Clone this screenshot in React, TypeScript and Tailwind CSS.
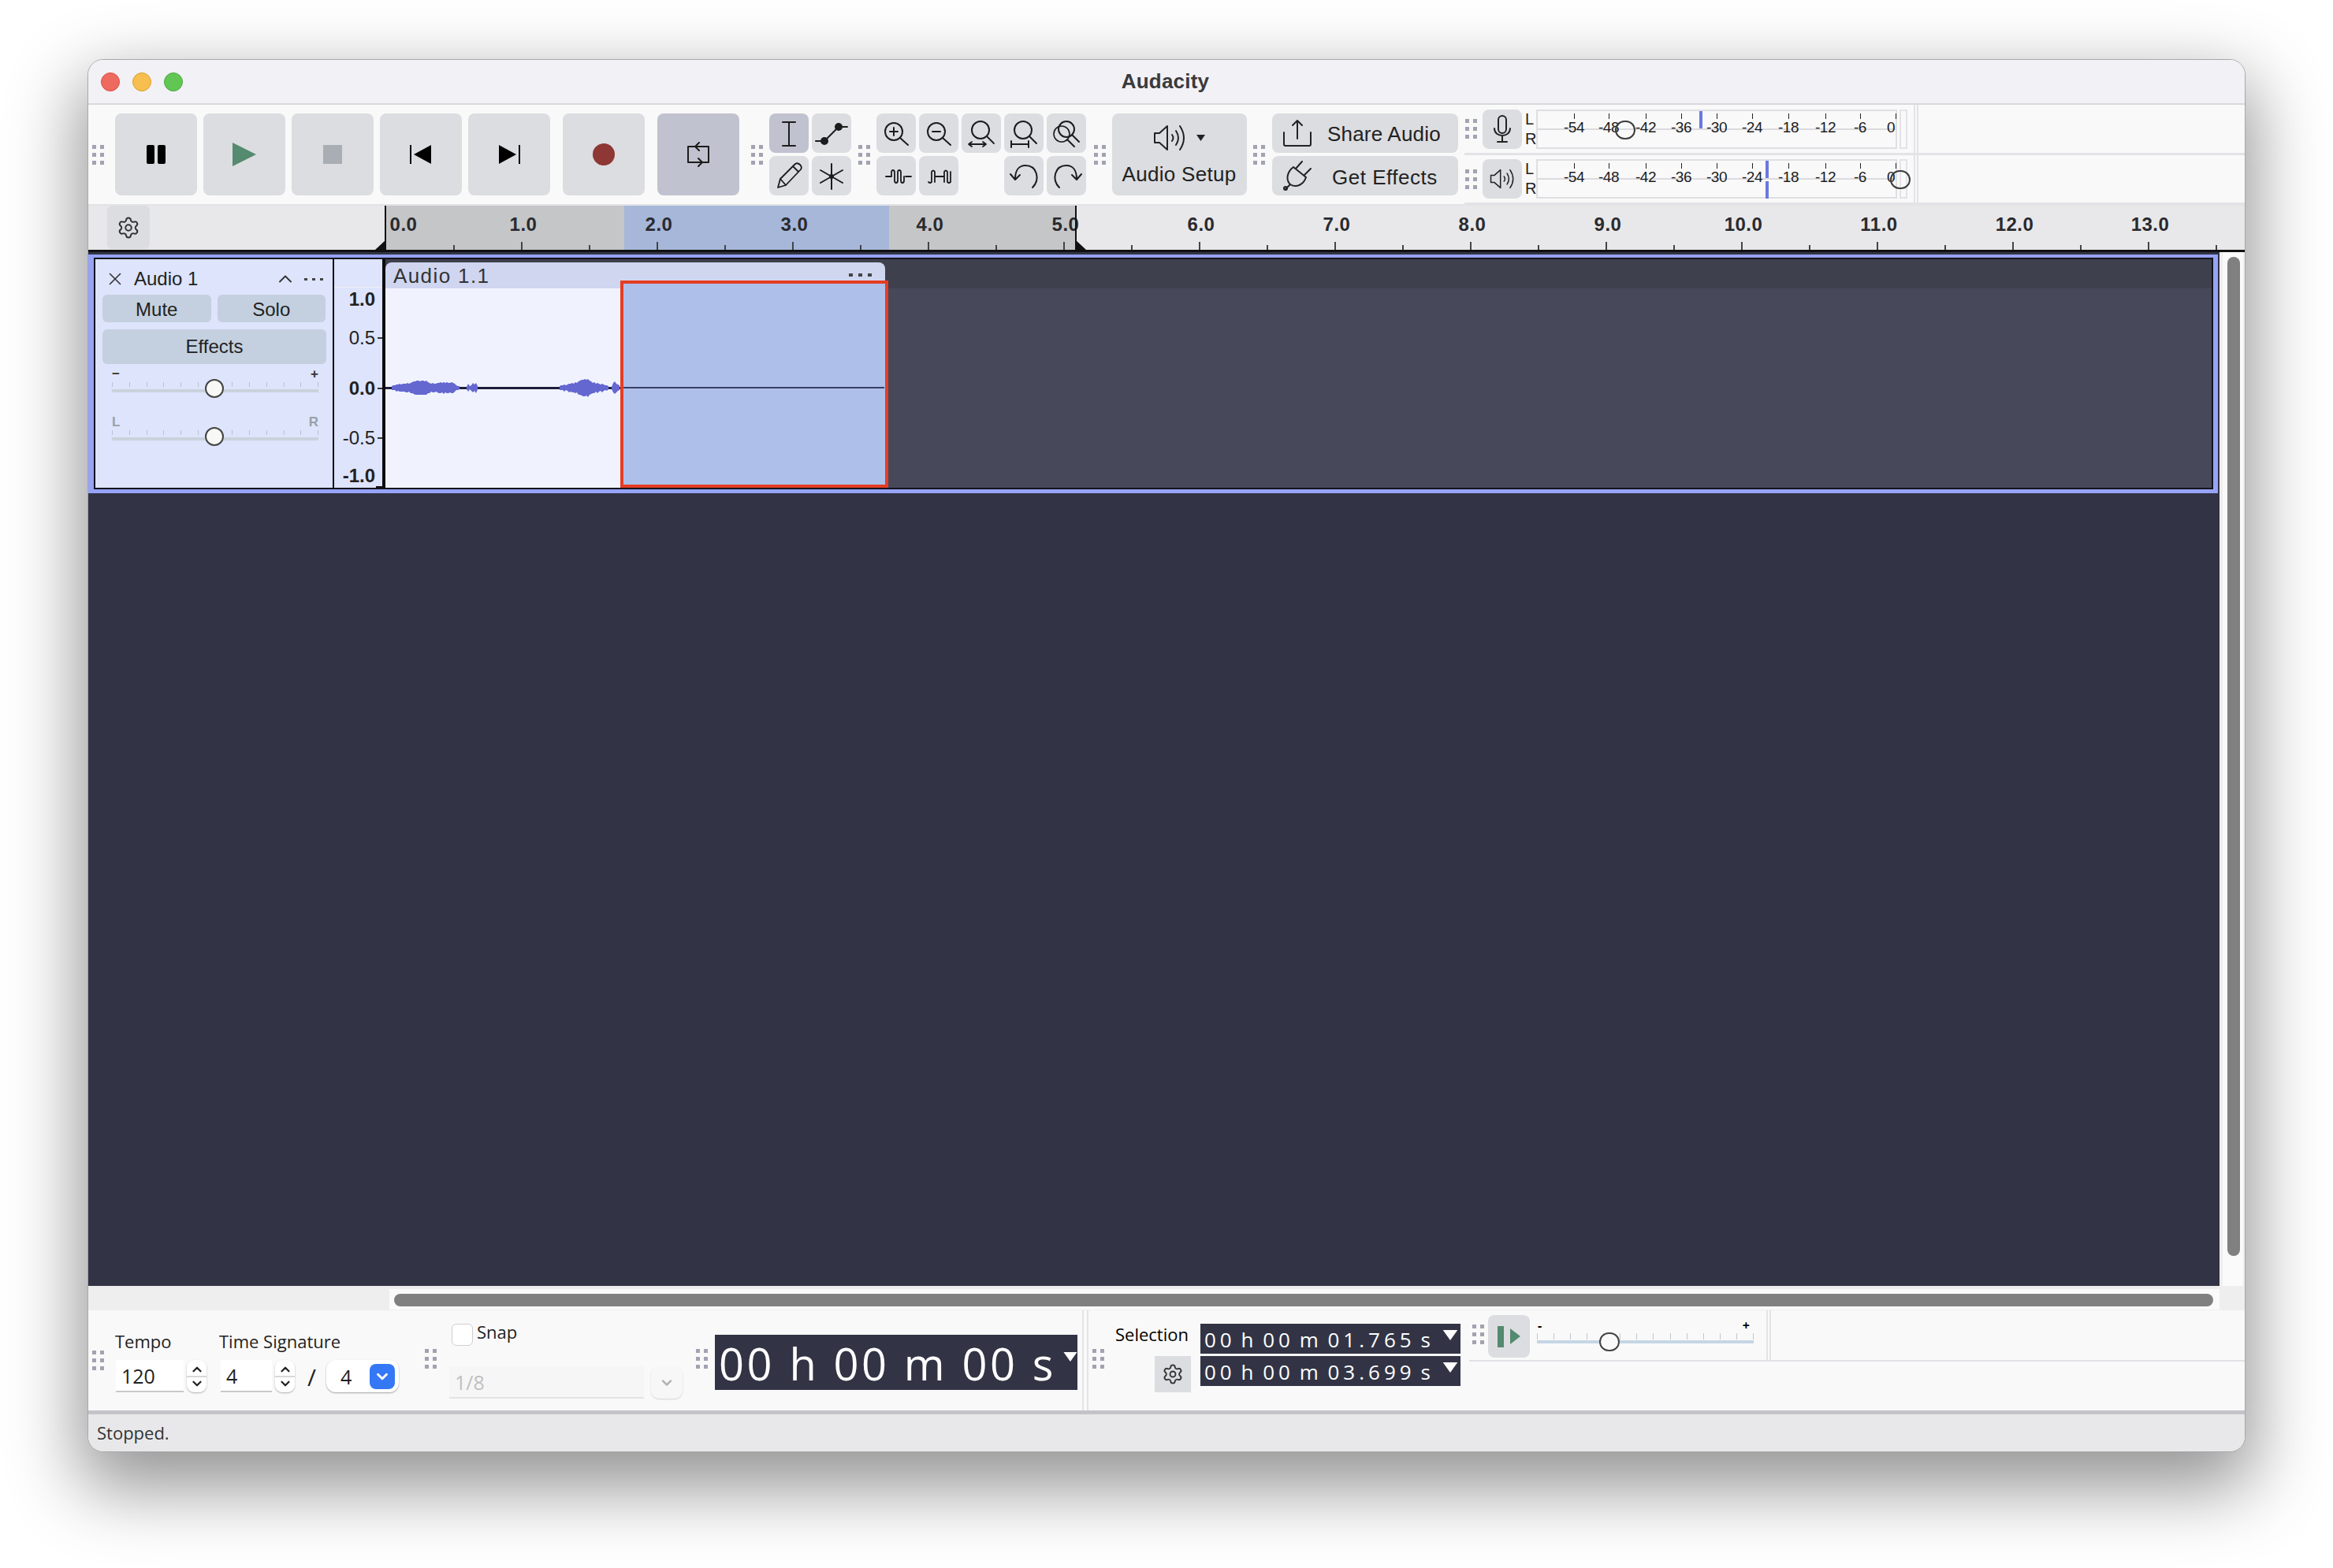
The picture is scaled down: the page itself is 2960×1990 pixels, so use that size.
import React from "react";
import { Settings, ChevronUp, ChevronDown, X } from "lucide-react";

const Grip = ({ className = "" }: { className?: string }) => (
  <div className={`grid w-[15px] shrink-0 grid-cols-2 gap-x-[5px] gap-y-[5px] ${className}`}>
    {[0, 1, 2, 3, 4, 5].map((i) => (
      <div key={i} className="h-[5px] w-[5px] bg-[#a2a2b2]" />
    ))}
  </div>
);

const Big = ({ children, className = "bg-[#dcdde1]" }: { children: React.ReactNode; className?: string }) => (
  <div className={`flex h-[104px] w-[104px] shrink-0 items-center justify-center rounded-[8px] ${className}`}>{children}</div>
);

const Tool = ({ children, on = false, blank = false }: { children?: React.ReactNode; on?: boolean; blank?: boolean }) => (
  <div className={`h-[50px] w-[50px] rounded-[8px] ${blank ? "" : on ? "bg-[#c0c2cf]" : "bg-[#dcdde1]"}`}>
    {children && (
      <svg viewBox="0 0 50 50" className="h-[50px] w-[50px]" fill="none" stroke="#1c1c1c" strokeWidth="2" strokeLinecap="round" strokeLinejoin="round">
        {children}
      </svg>
    )}
  </div>
);

const Speaker = ({ w = 42, h = 34 }: { w?: number; h?: number }) => (
  <svg width={w} height={h} viewBox="0 0 42 34" fill="none" stroke="#222" strokeWidth="2" strokeLinecap="round" strokeLinejoin="round">
    <path d="M2 11h6L18 2v30L8 23H2z" />
    <path d="M24 13q3 4 0 8" />
    <path d="M29 8q6 9 0 18" />
    <path d="M34 2q10 15 0 30" />
  </svg>
);

const meterLabels: [string, number][] = [
  ["-54", 1998], ["-48", 2042], ["-42", 2089], ["-36", 2134], ["-30", 2179],
  ["-24", 2224], ["-18", 2270], ["-12", 2317], ["-6", 2361], ["0", 2400],
];

const MeterRow = ({ icon, bar, knob, split = false, h }: { icon: React.ReactNode; bar: number; knob: number; split?: boolean; h: string }) => (
  <div className={`flex shrink-0 items-center border-b-[3px] border-[#e3e3e7] ${h}`}>
    <Grip className="ml-[1px]" />
    <div className="ml-[7px] flex h-[50px] w-[50px] items-center justify-center rounded-[8px] bg-[#dcdde1]">{icon}</div>
    <div className="ml-[4px] flex w-[14px] flex-col text-[20px] leading-[25px] text-[#222]">
      <span>L</span>
      <span>R</span>
    </div>
    <div className="relative h-[50px] w-[458px] shrink-0 border-2 border-[#dfdfe3]">
      <div className="absolute left-0 right-0 top-[22px] h-[2px] bg-[#dcdce0]" />
      {meterLabels.map(([t, x]) => (
        <React.Fragment key={t}>
          <div className="absolute top-[3px] h-[7px] w-[1px] bg-[#222]" style={{ left: (t === "0" ? 2406 : x) - 1952 }} />
          <div className="absolute top-[9px] w-[40px] text-center text-[19px] leading-[24px] tracking-[-0.5px] text-[#1c1c1c]" style={{ left: x - 1952 - 20 }}>
            {t}
          </div>
        </React.Fragment>
      ))}
      {split ? (
        <>
          <div className="absolute top-0 h-[22px] w-[4px] bg-[#6b78e0]" style={{ left: bar - 1952 }} />
          <div className="absolute top-[26px] h-[22px] w-[4px] bg-[#6b78e0]" style={{ left: bar - 1952 }} />
        </>
      ) : (
        <div className="absolute top-0 h-[22px] w-[4px] bg-[#6b78e0]" style={{ left: bar - 1952 }} />
      )}
      <div className="absolute top-[12px] z-10 h-[24px] w-[26px] rounded-full border-[2px] border-[#3c3c3c]" style={{ left: knob - 1952 - 13 }} />
    </div>
    <div className="ml-[3px] h-[50px] w-[10px] border-2 border-[#e3e3e7]" />
    <div className="ml-[8px] h-full w-[6px] border-x-2 border-[#e3e3e7]" />
  </div>
);

const seconds = Array.from({ length: 14 }, (_, i) => i);

const Ruler = () => (
  <div className="relative h-[59px] shrink-0 border-b-[3px] border-[#111] bg-[#e8e8ea]">
    <div className="absolute bottom-0 left-[377px] top-0 w-[303px] bg-[#c5c6c8]" />
    <div className="absolute bottom-0 left-[680px] top-0 w-[336px] bg-[#a6b7da]" />
    <div className="absolute bottom-0 left-[1016px] top-0 w-[236px] bg-[#c5c6c8]" />
    <div className="relative ml-[24px] flex h-[55px] w-[54px] items-center justify-center rounded-[6px] bg-[#dcdde1]">
      <Settings size={30} strokeWidth={1.6} color="#333" />
    </div>
    {seconds.map((s) => (
      <React.Fragment key={s}>
        <div
          className="absolute top-[12px] w-[60px] text-center text-[24px] font-bold leading-[24px] tracking-[0.5px] text-[#2a2a2e]"
          style={{ left: s === 0 ? 377 - 7 : 377 + 172 * s - 27 }}
        >
          {s}.0
        </div>
        {s > 0 && <div className="absolute bottom-0 h-[10px] w-[2px] bg-[#444]" style={{ left: 377 + 172 * s }} />}
        <div className="absolute bottom-0 h-[6px] w-[2px] bg-[#444]" style={{ left: 377 + 172 * s + 86 }} />
      </React.Fragment>
    ))}
    <div className="absolute bottom-0 left-[376px] top-0 w-[2px] bg-[#111]" />
    <div className="absolute bottom-0 left-[1252px] top-0 w-[2px] bg-[#111]" />
    <svg className="absolute bottom-0 left-[364px] h-[13px] w-[14px]" viewBox="0 0 14 13"><path d="M14 0V13H0z" fill="#111" /></svg>
    <svg className="absolute bottom-0 left-[1252px] h-[13px] w-[14px]" viewBox="0 0 14 13"><path d="M0 0V13H14z" fill="#111" /></svg>
  </div>
);

const HSlider = ({ left, right, dim = false }: { left: string; right: string; dim?: boolean }) => (
  <div className="relative mx-[12px] h-[44px] w-[262px]">
    <div className={`flex justify-between text-[17px] font-bold leading-[16px] ${dim ? "text-[#9aa0a8]" : "text-[#333]"}`}>
      <span>{left}</span>
      <span>{right}</span>
    </div>
    <div className="mt-[2px] flex h-[8px] items-start justify-between">
      {Array.from({ length: 13 }, (_, i) => (
        <div key={i} className="h-[6px] w-[1px] bg-[#b8c2cc]" />
      ))}
    </div>
    <div className="mt-[1px] h-[4px] bg-[#c8d3dd]" />
    <div className="absolute left-[118px] top-[14px] h-[24px] w-[24px] rounded-full border-2 border-[#444] bg-[#f8f8f6]" />
  </div>
);

const wave = (x0: number, step: number, amps: number[]) => {
  const top = amps.map((a, i) => `${x0 + i * step} ${126 - a}`);
  const bot = amps.map((a, i) => `${x0 + i * step} ${126 + a + (i % 3 === 0 ? 1 : 0)}`).reverse();
  return "M" + top.concat(bot).join("L") + "Z";
};
const waves = [
  wave(8, 2, [2, 3, 3, 4, 4, 5, 4, 5, 5, 5, 6, 5, 6, 7, 8, 8, 9, 9, 8, 9, 9, 8, 9, 7, 6, 5, 6, 5, 5, 6, 6, 7, 6, 7, 6, 7, 6, 6, 7, 6, 5, 3, 2, 2]),
  wave(103, 2, [1, 5, 2, 3, 6, 4, 6, 2]),
  wave(221, 2, [2, 3, 3, 4, 3, 4, 5, 5, 6, 5, 7, 6, 8, 9, 10, 10, 11, 10, 11, 9, 8, 6, 7, 5, 6, 5, 4, 5, 4, 3, 3, 2]),
  wave(287, 2, [1, 6, 8, 5, 4, 3]),
];

const axis: [string, number, boolean][] = [
  ["1.0", 51, true], ["0.5", 100, false], ["0.0", 164, true], ["-0.5", 227, false], ["-1.0", 275, true],
];

const TrackPanel = () => (
  <div className="w-[303px] shrink-0 border-r-2 border-[#111] bg-[#dde4fb] text-[#222]">
    <div className="flex h-[45px] items-start pt-[13px]">
      <X size={26} strokeWidth={1.5} className="ml-[12px] -mt-[1px]" color="#333" />
      <span className="ml-[11px] text-[24px] leading-[24px]">Audio 1</span>
      <ChevronUp size={28} strokeWidth={1.6} className="ml-[97px] -mt-[2px]" color="#333" />
      <div className="ml-[10px] mt-[11px] flex gap-[6px]">
        <div className="h-[3px] w-[4px] bg-[#444]" />
        <div className="h-[3px] w-[4px] bg-[#444]" />
        <div className="h-[3px] w-[4px] bg-[#444]" />
      </div>
    </div>
    <div className="flex gap-[8px] px-[9px]">
      <div className="flex h-[35px] w-[138px] items-center justify-center rounded-[6px] bg-[#c4d0df] pt-[2px] text-[24px]">Mute</div>
      <div className="flex h-[35px] w-[138px] items-center justify-center rounded-[6px] bg-[#c4d0df] pt-[2px] text-[24px]">Solo</div>
    </div>
    <div className="mx-[9px] mt-[9px] flex h-[44px] w-[284px] items-center justify-center rounded-[6px] bg-[#c4d0df] text-[24px]">Effects</div>
    <div className="mt-[5px] flex flex-col gap-[17px] pl-[9px]">
      <HSlider left="−" right="+" />
      <HSlider left="L" right="R" dim />
    </div>
  </div>
);

const Axis = () => (
  <div className="relative w-[61px] shrink-0 bg-[#dde4fb]">
    <div className="absolute left-0 right-0 top-[35px] h-[1px] bg-[#eef0f4]" />
    {axis.map(([t, y, b]) => (
      <React.Fragment key={t}>
        <div className={`absolute right-[9px] text-right text-[24px] leading-[24px] text-[#222] ${b ? "font-bold" : ""}`} style={{ top: y - 12 }}>
          {t}
        </div>
      </React.Fragment>
    ))}
    <div className="absolute right-0 top-[99px] h-[2px] w-[6px] bg-[#333]" />
    <div className="absolute right-0 top-[163px] h-[2px] w-[6px] bg-[#333]" />
    <div className="absolute right-0 top-[226px] h-[2px] w-[6px] bg-[#333]" />
    <div className="absolute bottom-0 right-0 h-[2px] w-[8px] bg-[#111]" />
  </div>
);

const Clip = () => (
  <div className="relative min-w-0 flex-1 border-l-4 border-[#0c0c0f] bg-[#474859]">
    <div className="h-[37px] bg-[#3f404d]" />
    <div className="absolute left-0 top-[4px] flex h-[33px] w-[634px] items-center justify-between rounded-t-[8px] bg-[#d0d6f0] pl-[10px] pr-[17px]">
      <span className="text-[26px] leading-[26px] tracking-[1.4px] text-[#333]">Audio 1.1</span>
      <div className="mt-[-2px] flex gap-[7px]">
        <div className="h-[4px] w-[5px] bg-[#444]" />
        <div className="h-[4px] w-[5px] bg-[#444]" />
        <div className="h-[4px] w-[5px] bg-[#444]" />
      </div>
    </div>
    <div className="h-[253px] w-[634px] bg-[#f0f3fe]">
      <svg className="block" width="634" height="253" viewBox="0 0 634 253">
        <rect x="0" y="125" width="300" height="3" fill="#1e1e3c" />
        {waves.map((d, i) => (
          <path key={i} d={d} fill="#6467cf" />
        ))}
      </svg>
    </div>
    <div className="absolute left-[298px] top-[27px] h-[263px] w-[340px] border-[4px] border-[#e53d24] bg-[#aec0ea]">
      <div className="mt-[131px] h-[2px] w-[331px] bg-[#3a3f66]" />
    </div>
  </div>
);

const Stepper = () => (
  <div className="flex h-[41px] w-[25px] flex-col items-center justify-center rounded-[9px] bg-white shadow-[0_1px_2px_rgba(0,0,0,0.3)]">
    <ChevronUp size={18} strokeWidth={3} color="#222" className="-mb-[1px]" />
    <div className="h-[2px] w-full bg-[#d8d8d8]" />
    <ChevronDown size={18} strokeWidth={3} color="#222" className="-mt-[1px]" />
  </div>
);

const Field = ({ w, children }: { w: string; children: React.ReactNode }) => (
  <div className={`flex h-[41px] items-center border-b-2 border-[#c8c8c8] bg-white pl-[7px] pt-[3px] text-[25px] text-[#222] ${w}`}>{children}</div>
);

const Tri = ({ className = "" }: { className?: string }) => (
  <svg viewBox="0 0 20 14" className={className}><path d="M0 0H20L10 14z" fill="#fff" /></svg>
);

const SelBox = ({ t }: { t: string }) => (
  <div className="flex h-[38px] w-[330px] items-center bg-[#323445] pl-[5px] pr-[3px] pt-[2px] font-['Open_Sans'] text-[26px] leading-[36px] tracking-[5px] text-white [word-spacing:-5px]">
    <span className="whitespace-pre">{t}</span>
    <Tri className="ml-auto mb-[12px] h-[13px] w-[20px]" />
  </div>
);

export default function App() {
  return (
    <div className="h-[1990px] w-[2960px] overflow-hidden bg-white pl-[111px] pt-[75px] font-['Liberation_Sans',sans-serif]">
      <div className="flex h-[1768px] w-[2738px] flex-col overflow-hidden rounded-[20px] border border-[#a8a8a8] bg-[#f9f9f9] shadow-[0_36px_90px_10px_rgba(0,0,0,0.42)]">
        {/* title */}
        <div className="relative flex h-[57px] shrink-0 items-center border-b-2 border-[#d9d9dc] bg-[#f2f1f6]">
          <div className="ml-[16px] flex gap-[16px]">
            <div className="h-[24px] w-[24px] rounded-full border border-[#df4a40] bg-[#ee6a5f]" />
            <div className="h-[24px] w-[24px] rounded-full border border-[#dba02e] bg-[#f6bf4f]" />
            <div className="h-[24px] w-[24px] rounded-full border border-[#4ba93c] bg-[#62c655]" />
          </div>
          <div className="absolute inset-x-0 top-[12px] pr-[3px] text-center text-[26px] font-bold leading-[30px] tracking-[0.2px] text-[#3a3a3c]">Audacity</div>
        </div>

        {/* top toolbar */}
        <div className="flex h-[128px] shrink-0 items-center border-b-2 border-[#e3e3e7] bg-[#f9f9f9]">
          <Grip className="ml-[5px]" />
          <div className="ml-[14px] flex gap-[8px]">
            <Big>
              <svg width="24" height="24" viewBox="0 0 24 24"><rect x="0" width="10" height="24" rx="2" fill="#000" /><rect x="14" width="10" height="24" rx="2" fill="#000" /></svg>
            </Big>
            <Big>
              <svg width="30" height="30" viewBox="0 0 30 30"><path d="M0 0L30 15L0 30z" fill="#548a6e" /></svg>
            </Big>
            <Big><div className="h-[24px] w-[24px] bg-[#a9adb4]" /></Big>
            <Big>
              <svg width="28" height="24" viewBox="0 0 28 24"><rect x="0" width="2" height="24" fill="#000" /><path d="M5 12L27 0V24z" fill="#000" /></svg>
            </Big>
            <Big>
              <svg width="28" height="24" viewBox="0 0 28 24"><rect x="26" width="2" height="24" fill="#000" /><path d="M23 12L1 0V24z" fill="#000" /></svg>
            </Big>
          </div>
          <Big className="ml-[16px] bg-[#dcdde1]"><div className="h-[28px] w-[28px] rounded-full bg-[#8f3734]" /></Big>
          <Big className="ml-[16px] bg-[#c0c2cf]">
            <svg width="30" height="32" viewBox="0 0 30 32" fill="none" stroke="#1c1c1c" strokeWidth="2" strokeLinecap="round" strokeLinejoin="round">
              <path d="M2 26V6H28V26H2" />
              <path d="M16 1L11 6L16 11" />
              <path d="M15 21L20 26L15 31" />
            </svg>
          </Big>
          <Grip className="ml-[15px]" />
          <div className="ml-[8px] grid grid-cols-2 gap-x-[4px] gap-y-[4px]">
            <Tool on><path d="M25 11V41M17 11H33M17 41H33" /></Tool>
            <Tool>
              <path d="M5 35H16M16 35L34 17M34 17H45" />
              <circle cx="16" cy="35" r="4" fill="#1c1c1c" />
              <circle cx="34" cy="17" r="4" fill="#1c1c1c" />
            </Tool>
            <Tool>
              <path d="M11 40l3-11L33 10q3-2 6 1t1 6L21 37zM14 29l7 8M30 13l7 7" strokeWidth="1.8" />
            </Tool>
            <Tool>
              <path d="M25 10V42M11 18L39 34M39 18L11 34" />
              <circle cx="25" cy="26" r="2" fill="#1c1c1c" />
            </Tool>
          </div>
          <Grip className="ml-[9px]" />
          <div className="ml-[8px] grid grid-cols-5 gap-x-[4px] gap-y-[4px]">
            <Tool><circle cx="22" cy="23" r="11" /><path d="M30 31L40 40M17 23H27M22 18V28" /></Tool>
            <Tool><circle cx="22" cy="23" r="11" /><path d="M30 31L40 40M17 23H27" /></Tool>
            <Tool>
              <circle cx="24" cy="21" r="11" /><path d="M32 29L41 38M9 39H31M13 36l-4 3l4 3M27 36l4 3l-4 3" strokeWidth="1.8" />
            </Tool>
            <Tool><circle cx="24" cy="21" r="11" /><path d="M32 29L41 38M9 39H31M9 35V43M31 35V43" /></Tool>
            <Tool>
              <circle cx="25" cy="20" r="10" /><circle cx="19" cy="26" r="10" strokeWidth="1.6" /><path d="M32 27L41 36M26 33L35 42" />
            </Tool>
            <Tool>
              <path d="M12 26H19M37 26H44M19 26V21q0-3 2-3t2 3V31q0 3 2 3t2-3V21q0-3 2-3t2 3V31q0 3 2 3t2-3V26" strokeWidth="1.8" />
            </Tool>
            <Tool>
              <path d="M12 33q2 2 4 0V20q2-3 4 0V33M20 26H32M32 33V20q2-3 4 0V33q2 2 4 0V20" strokeWidth="1.8" />
            </Tool>
            <Tool blank />
            <Tool>
              <path d="M36 40C46 30 42 12 27 12C19 12 14 18 14 29M8 23L14 30L20 24" />
            </Tool>
            <Tool>
              <path d="M16 40C6 30 10 12 25 12C33 12 38 18 38 29M44 23L38 30L32 24" />
            </Tool>
          </div>
          <Grip className="ml-[10px]" />
          <div className="ml-[8px] flex h-[104px] w-[171px] shrink-0 flex-col items-center rounded-[8px] bg-[#dcdde1] pt-[14px]">
            <div className="-ml-[2px] flex items-center gap-[13px]">
              <Speaker />
              <svg width="11" height="8" viewBox="0 0 11 8"><path d="M0 0H11L5.5 8z" fill="#222" /></svg>
            </div>
            <div className="mt-[14px] -ml-[1px] text-[26px] leading-[30px] tracking-[0.3px] text-[#222]">Audio Setup</div>
          </div>
          <Grip className="ml-[8px]" />
          <div className="ml-[9px] flex w-[236px] shrink-0 flex-col gap-[4px]">
            <div className="flex h-[50px] items-center rounded-[8px] bg-[#dcdde1] pl-[14px]">
              <svg width="36" height="36" viewBox="0 0 36 36" fill="none" stroke="#222" strokeWidth="2" strokeLinecap="round" strokeLinejoin="round">
                <path d="M1 17V32a2 2 0 0 0 2 2H33a2 2 0 0 0 2-2V17M18 25V2M12 8L18 2L24 8" />
              </svg>
              <span className="ml-[20px] pt-[2px] text-[26px] tracking-[0.2px] text-[#222]">Share Audio</span>
            </div>
            <div className="flex h-[50px] items-center rounded-[8px] bg-[#dcdde1] pl-[14px]">
              <svg width="36" height="38" viewBox="0 0 36 38" fill="none" stroke="#222" strokeWidth="2" strokeLinecap="round" strokeLinejoin="round">
                <path d="M9 30C3 24 5 14 13 8L29 21C26 30 17 35 9 30zM16 10L24 1M27 18L35 10M9 30L3 36" />
                <circle cx="3" cy="35" r="2" />
              </svg>
              <span className="ml-[26px] pt-[4px] text-[26px] tracking-[0.5px] text-[#222]">Get Effects</span>
            </div>
          </div>
          <div className="ml-[8px] flex h-[128px] min-w-0 flex-1 flex-col self-start">
            <MeterRow
              h="h-[64px]"
              bar={2157}
              knob={2063}
              icon={
                <svg width="24" height="36" viewBox="0 0 24 36" fill="none" stroke="#222" strokeWidth="2" strokeLinecap="round">
                  <rect x="7" y="1" width="10" height="22" rx="5" />
                  <path d="M2 17c0 12 20 12 20 0M12 27v7M6 34H18" />
                </svg>
              }
            />
            <MeterRow h="h-[63px]" bar={2241} knob={2412} split icon={<Speaker w={32} h={30} />} />
          </div>
        </div>

        <Ruler />

        {/* tracks */}
        <div className="flex min-h-0 flex-1">
          <div className="w-[2704px] bg-[#323445] pt-[3px]">
            <div className="mr-[2px] h-[303px] bg-[#96a3f6] pb-[5px] pl-[7px] pr-[6px] pt-[4px]">
              <div className="flex h-full border-2 border-[#14141c]">
                <TrackPanel />
                <Axis />
                <Clip />
              </div>
            </div>
          </div>
          <div className="w-[32px] bg-[#eeeeee] pl-[4px] pr-[2px]">
            <div className="h-full bg-[#fafafa] pl-[6px] pt-[6px]">
              <div className="h-[1268px] w-[16px] rounded-[8px] bg-[#808080]" />
            </div>
          </div>
        </div>

        {/* horizontal scrollbar */}
        <div className="flex h-[31px] shrink-0 bg-[#eeeeee] pt-[4px]">
          <div className="ml-[382px] h-[26px] w-[2322px] bg-[#fafafa] pl-[6px] pt-[6px]">
            <div className="h-[16px] w-[2308px] rounded-[8px] bg-[#808080]" />
          </div>
        </div>

        {/* bottom toolbar */}
        <div className="flex h-[132px] shrink-0 items-center border-b-[5px] border-[#c4c4c8] bg-[#f9f9f9] font-['Open_Sans',sans-serif] text-[#222]">
          <Grip className="ml-[5px]" />
          <div className="ml-[14px] w-[133px] self-start pt-[24px]">
            <div className="text-[22px] leading-[30px]">Tempo</div>
            <div className="mt-[9px] flex gap-[4px] pl-[1px]">
              <Field w="w-[86px]">120</Field>
              <Stepper />
            </div>
          </div>
          <div className="w-[229px] self-start pt-[24px]">
            <div className="-ml-[1px] text-[22px] leading-[30px]">Time Signature</div>
            <div className="mt-[9px] flex items-start pl-[1px]">
              <Field w="w-[65px]">4</Field>
              <div className="ml-[4px]"><Stepper /></div>
              <div className="ml-[16px] text-[30px] leading-[44px]">/</div>
              <div className="ml-[13px] flex h-[41px] w-[92px] items-center rounded-[12px] bg-white pl-[21px] text-[25px] shadow-[0_1px_2px_rgba(0,0,0,0.35)]">
                <span className="-ml-[3px] pt-[2px]">4</span>
                <div className="ml-[23px] flex h-[32px] w-[32px] items-center justify-center rounded-[8px] bg-[#3478f6]">
                  <ChevronDown size={22} strokeWidth={3.2} color="#fff" />
                </div>
              </div>
            </div>
          </div>
          <Grip className="ml-[31px] -translate-y-[2px]" />
          <div className="ml-[16px] w-[296px] self-start pt-[17px]">
            <div className="flex h-[28px] items-start pl-[3px]">
              <div className="h-[28px] w-[27px] rounded-[6px] border border-[#cfcfcf] bg-white" />
              <span className="ml-[5px] -mt-[4px] text-[22px] leading-[28px]">Snap</span>
            </div>
            <div className="mt-[26px] flex gap-[9px]">
              <div className="flex h-[41px] w-[247px] items-center border-b-2 border-[#e3e3e3] bg-[#f6f6f6] pl-[7px] pt-[2px] text-[25px] text-[#c0c0c0]">1/8</div>
              <div className="flex h-[41px] w-[40px] items-center justify-center rounded-[10px] bg-[#f7f7f7] shadow-[0_1px_2px_rgba(0,0,0,0.15)]">
                <ChevronDown size={20} strokeWidth={3} color="#b5b5b5" />
              </div>
            </div>
          </div>
          <Grip className="ml-[17px] -translate-y-[2px]" />
          <div className="ml-[9px] flex h-[70px] w-[460px] shrink-0 translate-y-[2px] items-center bg-[#323445] pl-[5px] pr-[0px] pt-[2px] text-[56px] tracking-[3.6px] text-white">
            <span className="whitespace-pre leading-[68px]">00 h 00 m 00 s</span>
            <Tri className="ml-auto mb-[16px] h-[12px] w-[18px]" />
          </div>
          <div className="ml-[6px] h-full w-[8px] border-x-2 border-[#e3e3e7]" />
          <Grip className="ml-[5px] -translate-y-[2px]" />
          <div className="ml-[14px] flex w-[438px] shrink-0 flex-col self-start pt-[17px]">
            <div className="flex h-[38px] items-start">
              <span className="-mt-[2px] w-[96px] text-[22px] leading-[30px] text-black">Selection</span>
              <div className="ml-[12px]"><SelBox t="00 h 00 m 01.765 s" /></div>
            </div>
            <div className="mt-[3px] flex items-start">
              <div className="ml-[50px] flex h-[46px] w-[46px] items-center justify-center bg-[#dcdde1]">
                <Settings size={28} strokeWidth={1.6} color="#333" />
              </div>
              <div className="ml-[12px]"><SelBox t="00 h 00 m 03.699 s" /></div>
            </div>
          </div>
          <div className="ml-[11px] flex h-full min-w-0 flex-1 flex-col self-start">
            <div className="flex h-[65px] shrink-0 items-center border-b-2 border-[#e3e3e7]">
              <Grip className="ml-[4px] -mt-[2px]" />
              <div className="ml-[5px] mt-[3px] flex h-[54px] w-[53px] items-center justify-center gap-[8px] rounded-[8px] bg-[#dcdde1]">
                <div className="h-[27px] w-[8px] bg-[#548a6e]" />
                <svg width="13" height="20" viewBox="0 0 13 20"><path d="M0 0L13 10L0 20z" fill="#548a6e" /></svg>
              </div>
              <div className="relative ml-[9px] mt-[4px] h-[50px] w-[275px]">
                <div className="flex justify-between px-[1px] text-[16px] font-bold leading-[20px] text-black">
                  <span>-</span>
                  <span className="mr-[4px]">+</span>
                </div>
                <div className="flex h-[9px] items-start justify-between">
                  {Array.from({ length: 14 }, (_, i) => (
                    <div key={i} className="h-[8px] w-[1px] bg-[#bcc8d4]" />
                  ))}
                </div>
                <div className="h-[4px] bg-[#c5d5e5]" />
                <div className="absolute left-[79px] top-[19px] h-[24px] w-[26px] rounded-full border-2 border-[#444] bg-[#f9f9f9]" />
              </div>
              <div className="ml-[16px] h-full w-[6px] border-x-2 border-[#e3e3e7]" />
            </div>
          </div>
        </div>

        {/* status */}
        <div className="flex h-[47px] shrink-0 items-center bg-[#e8e8ea] pl-[11px] font-['Open_Sans',sans-serif] text-[22px] text-[#333]">Stopped.</div>
      </div>
    </div>
  );
}
